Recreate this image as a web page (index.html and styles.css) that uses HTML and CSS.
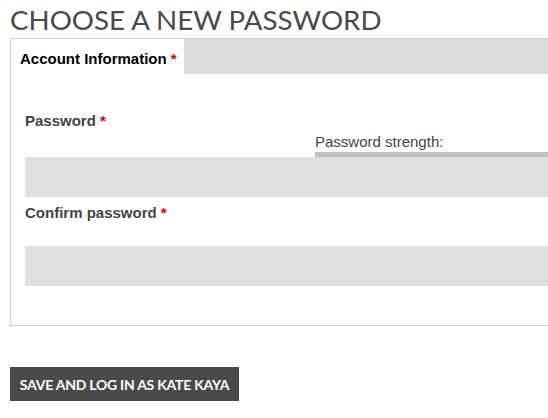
FILE: index.html
```html
<!DOCTYPE html>
<html>
<head>
<meta charset="utf-8">
<link rel="stylesheet" href="styles.css">
</head>
<body>
<h1 class="title">Choose a new password</h1>
<div class="box">
  <div class="tabs">
    <div class="tab">Account Information <span class="req">*</span></div>
    <div class="tab-fill"></div>
  </div>
  <div class="content">
    <div class="label">Password <span class="req">*</span></div>
    <div class="strength">
      <div class="strength-text">Password strength:</div>
      <div class="strength-bar"></div>
    </div>
    <div class="input"></div>
    <div class="label label-confirm">Confirm password <span class="req">*</span></div>
    <div class="input input-confirm"></div>
  </div>
</div>
<button class="save">Save and log in as Kate Kaya</button>
</body>
</html>
```
FILE: styles.css
```css
html, body {
  margin: 0;
  padding: 0;
  background: #fff;
  overflow: hidden;
}
body {
  padding: 0 0 0 10px;
  font-family: "Liberation Sans", Arial, sans-serif;
}
.title {
  margin: 0;
  padding-top: 4px;
  height: 34px;
  font-family: Lato, sans-serif;
  font-weight: 400;
  font-size: 27.7px;
  line-height: 32px;
  color: #4a4a4a;
  text-transform: uppercase;
  letter-spacing: 0;
  white-space: nowrap;
}
.box {
  border: 1px solid #cccccc;
  border-right: 0;
  padding-bottom: 39px;
}
.tabs {
  display: flex;
  height: 35px;
}
.tab {
  width: 173px;
  background: #fff;
  font-weight: bold;
  font-size: 15px;
  color: #000;
  padding: 11px 0 0 9px;
  box-sizing: border-box;
  line-height: 18px;
  white-space: nowrap;
}
.tab-fill {
  flex: 1;
  background: #dcdcdc;
}
.req {
  color: #e00000;
}
.content {
  padding: 38px 0 0 14px;
}
.label {
  font-weight: bold;
  font-size: 15px;
  line-height: 18px;
  color: #444;
}
.strength {
  margin-left: 290px;
  margin-top: 3px;
}
.strength-text {
  font-size: 15px;
  line-height: 18px;
  color: #444;
}
.strength-bar {
  margin-top: 1px;
  height: 5px;
  background: #c0c0c0;
}
.input {
  height: 40px;
  background: #e0e0e0;
}
.label-confirm {
  margin-top: 7px;
}
.input-confirm {
  margin-top: 24px;
}
.save {
  display: block;
  margin-top: 41px;
  height: 34px;
  width: 229px;
  padding: 0;
  border: 0;
  background: #4a4a4a;
  color: #fff;
  font-family: Lato, sans-serif;
  font-weight: bold;
  font-size: 14px;
  letter-spacing: -0.25px;
  text-transform: uppercase;
  white-space: nowrap;
}
```
